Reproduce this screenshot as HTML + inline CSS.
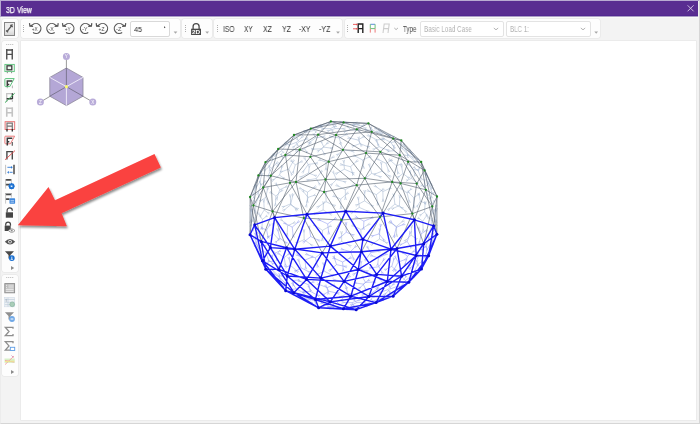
<!DOCTYPE html>
<html><head><meta charset="utf-8">
<style>
html,body{margin:0;padding:0;width:700px;height:424px;overflow:hidden;background:#f3f3f3;font-family:"Liberation Sans",sans-serif;}
.abs{position:absolute;}
#win{position:absolute;left:0;top:0;width:700px;height:424px;background:#f3f3f3;}
#bord{position:absolute;left:0;top:0;width:698px;height:422px;border:1px solid #d6d6d6;border-top-color:#cdc3da;border-left-color:#ececec;}
#title{position:absolute;left:1px;top:1px;width:697px;height:15px;background:#592d91;}
#title span{position:absolute;left:5px;top:4px;font-size:8.3px;line-height:10px;color:#fff;transform:scaleX(0.84);transform-origin:0 0;will-change:transform;-webkit-text-stroke:0.25px #fff;}
.panel{position:absolute;background:#fdfdfd;border-radius:2px;box-shadow:0 0 0 0.5px #e4e4e4;}
#vp{position:absolute;left:21px;top:41px;width:675px;height:379px;background:#fff;box-shadow:0 0 0 0.6px #e6e6e6;}
.tt{position:absolute;font-size:8.2px;line-height:10px;color:#333;white-space:nowrap;will-change:transform;transform-origin:0 0;}
.grip{position:absolute;width:1px;height:7px;background:repeating-linear-gradient(#b8b8b8 0 1px,transparent 1px 2px);}
.hgrip{position:absolute;height:1px;width:8px;background:repeating-linear-gradient(90deg,#b8b8b8 0 1px,transparent 1px 2px);}
.dd{position:absolute;width:0;height:0;border-left:3px solid transparent;border-right:3px solid transparent;border-top:3px solid #a6a6a6;}
.combo{position:absolute;background:#fff;border:1px solid #e3e3e3;border-radius:2px;}
svg{position:absolute;overflow:visible;z-index:5;}
</style></head>
<body>
<div id="win">
  <div id="bord"></div>
  <div id="title"><span>3D View</span>
    <svg style="left:685.3px;top:3.2px" width="8" height="8" viewBox="0 0 8 8"><path d="M1.6 1.3L7.6 7.3M7.6 1.3L1.6 7.3" stroke="#ddd3ea" stroke-width="0.85"/></svg>
  </div>

  <div class="abs" style="left:1px;top:15px;width:697px;height:1px;background:#512790;"></div>
  <div class="abs" style="left:1px;top:16px;width:697px;height:1px;background:#ab9dc6;"></div>
  <div class="abs" style="left:1px;top:17px;width:697px;height:1px;background:#f9f9f9;"></div>
  <div class="abs" style="left:0;top:0;width:1px;height:17px;background:#b6a8cf;"></div>
  <div class="abs" style="left:0;top:0;width:699px;height:1px;background:#b9abd2;"></div>
  <!-- top-left wrench panel -->
  <div class="panel" style="left:1.5px;top:18.5px;width:16.8px;height:19.6px;"></div>
  <div class="abs" style="left:4px;top:22px;width:9px;height:12px;background:linear-gradient(#ececec 60%,#d6d6d6);border:1px solid #858585;"></div>

  <!-- main toolbar panels -->
  <div class="panel" style="left:21px;top:18.5px;width:159.4px;height:19.6px;"></div>
  <div class="panel" style="left:181.7px;top:18.5px;width:30.3px;height:19.6px;"></div>
  <div class="panel" style="left:213.5px;top:18.5px;width:128.6px;height:19.6px;"></div>
  <div class="panel" style="left:344.8px;top:18.5px;width:255.7px;height:19.6px;"></div>

  <!-- left toolbar panels -->
  <div class="panel" style="left:2px;top:41px;width:16px;height:231px;"></div>
  <div class="panel" style="left:2px;top:275px;width:16px;height:101px;"></div>


  <!-- toolbar contents -->
  <svg style="left:0;top:0" width="700" height="424" viewBox="0 0 700 424">
    <!-- wrench -->
    <path d="M7.1 31.4L11.5 25.9" stroke="#555" stroke-width="1.4" fill="none"/>
    <path d="M10.3 25.1L12.7 27M6 30.6L8.1 32.2M11.6 26L12.3 24.3" stroke="#555" stroke-width="1.3" fill="none"/>
    <!-- grips -->
    <path d="M23.5 25v1M23.5 27v1M23.5 29v1M23.5 31v1" stroke="#b0b0b0" stroke-width="1"/>
    <path d="M185.5 25v1M185.5 27v1M185.5 29v1M185.5 31v1" stroke="#b0b0b0" stroke-width="1"/>
    <path d="M217.5 25v1M217.5 27v1M217.5 29v1M217.5 31v1" stroke="#b0b0b0" stroke-width="1"/>
    <path d="M347.5 25v1M347.5 27v1M347.5 29v1M347.5 31v1" stroke="#b0b0b0" stroke-width="1"/>
    <!-- rotation icons -->
    <path d="M33.03 32.60A5.0 5.0 0 1 0 32.18 25.15L29.90 26.30M29.50 23.10L29.90 26.30L33.10 26.50M54.67 32.60A5.0 5.0 0 1 1 55.52 25.15L57.80 26.30M58.20 23.10L57.80 26.30L54.60 26.50M66.03 32.60A5.0 5.0 0 1 0 65.18 25.15L62.90 26.30M62.50 23.10L62.90 26.30L66.10 26.50M88.27 32.60A5.0 5.0 0 1 1 89.12 25.15L91.40 26.30M91.80 23.10L91.40 26.30L88.20 26.50M99.73 32.60A5.0 5.0 0 1 0 98.88 25.15L96.60 26.30M96.20 23.10L96.60 26.30L99.80 26.50M122.17 32.60A5.0 5.0 0 1 1 123.02 25.15L125.30 26.30M125.70 23.10L125.30 26.30L122.10 26.50" fill="none" stroke="#555" stroke-width="1.2" stroke-linejoin="miter"/>
    <g font-family="Liberation Sans" font-size="5.9" fill="#4a4a4a">
      <text x="31.8" y="30.8" textLength="5.9" lengthAdjust="spacingAndGlyphs">+X</text><text x="48.6" y="30.8" textLength="5.3" lengthAdjust="spacingAndGlyphs">-X</text><text x="64.8" y="30.8" textLength="5.9" lengthAdjust="spacingAndGlyphs">+Y</text><text x="82.2" y="30.8" textLength="5.3" lengthAdjust="spacingAndGlyphs">-Y</text><text x="98.5" y="30.8" textLength="5.9" lengthAdjust="spacingAndGlyphs">+Z</text><text x="116.1" y="30.8" textLength="5.3" lengthAdjust="spacingAndGlyphs">-Z</text>
    </g>
    <!-- 45 caret -->
    <path d="M164 26.2l1.6 1-1.6 1z" fill="#444"/>
    <!-- dropdown arrows -->
    <path d="M173.6 31.4h3.8l-1.9 2.4z M205.3 31.4h3.8l-1.9 2.4z M336.1 31.4h3.8l-1.9 2.4z M594.3 31.4h3.8l-1.9 2.4z" fill="#a8a8a8"/>
    <!-- lock 2D -->
    <path d="M193.1 29V26.6a3 3 0 0 1 6 0V29" fill="none" stroke="#4a4a4a" stroke-width="1.3"/>
    <rect x="191.1" y="28.7" width="9.9" height="6.3" fill="#4a4a4a"/>
    <text x="191.9" y="34.2" font-family="Liberation Sans" font-size="5.6" font-weight="bold" fill="#fff" textLength="8.2" lengthAdjust="spacingAndGlyphs">2D</text>
    <!-- R icons -->
    <path d="M358.2 33V24h4.6v9M358.2 28.6h4.6" fill="none" stroke="#222" stroke-width="1.4"/>
    <path d="M353 24.4h4.4M353 28.8h4.4" stroke="#e85050" stroke-width="0.9"/>
    <path d="M356.2 23.4l1.6 1-1.6 1zM356.2 27.8l1.6 1-1.6 1z" fill="#e85050"/>
    <path d="M370.3 24.3h4.8" stroke="#5b8ed6" stroke-width="1"/>
    <path d="M370.3 24.3v4.3M375.1 24.3v4.3M370.3 28.6h4.8" stroke="#6cc17a" stroke-width="1" fill="none"/>
    <path d="M370.3 28.6v4M375.1 28.6v4" stroke="#ec7b7b" stroke-width="1" fill="none"/>
    <path d="M383 33l1.2-9h5l-1.2 9M383.6 28.6h5" fill="none" stroke="#cdcdcd" stroke-width="1.1"/>
    <path d="M394.3 28l1.8 1.6 1.8-1.6" fill="none" stroke="#9a9a9a" stroke-width="0.8"/>
    <path d="M493.8 28l2.2 1.8 2.2-1.8M580.8 28l2.2 1.8 2.2-1.8" fill="none" stroke="#a0a0a0" stroke-width="0.8"/>
  </svg>
  <div class="combo" style="left:130px;top:21px;width:38px;height:14px;border-color:#d9d9d9"></div>
  <div class="tt" style="left:133.6px;top:25.2px;font-size:8px;color:#222;transform:scaleX(0.9)">45</div>
  <div class="tt" style="left:223.3px;top:25px;font-size:8.2px;color:#333;transform:scaleX(0.814)">ISO</div>
  <div class="tt" style="left:244.3px;top:25px;font-size:8.2px;color:#333;transform:scaleX(0.79)">XY</div>
  <div class="tt" style="left:263.3px;top:25px;font-size:8.2px;color:#333;transform:scaleX(0.84)">XZ</div>
  <div class="tt" style="left:282px;top:25px;font-size:8.2px;color:#333;transform:scaleX(0.85)">YZ</div>
  <div class="tt" style="left:299px;top:25px;font-size:8.2px;color:#333;transform:scaleX(0.83)">-XY</div>
  <div class="tt" style="left:318.6px;top:25px;font-size:8.2px;color:#333;transform:scaleX(0.86)">-YZ</div>
  <div class="tt" style="left:403.2px;top:25px;font-size:8.2px;color:#444;transform:scaleX(0.75)">Type</div>
  <div class="combo" style="left:420px;top:21px;width:82px;height:14px;"></div>
  <div class="combo" style="left:506px;top:21px;width:83px;height:14px;"></div>
  <div class="tt" style="left:424px;top:25px;font-size:8.2px;color:#b4b4b4;transform:scaleX(0.774)">Basic Load Case</div>
  <div class="tt" style="left:510px;top:25px;font-size:8.2px;color:#b4b4b4;transform:scaleX(0.76)">BLC 1:</div>

  <!-- viewport -->
  <div id="vp"></div>
  <svg style="left:0;top:0" width="700" height="424" viewBox="0 0 700 424">
    <path d="M6 44.5h1.3M8 44.5h1.3M10 44.5h1.3M12 44.5h1.3" stroke="#c8c8c8" stroke-width="1"/>
    <path d="M6 49.95h7M6.75 59.4V49M12.25 59.4V49M6.75 54.4h5.5" stroke="#4e4e4e" stroke-width="1.4" fill="none"/>
    <rect x="4.9" y="64.4" width="9.4" height="7.2" fill="#f2faf4" stroke="#5cc27c" stroke-width="0.9"/>
    <rect x="7" y="65.8" width="4.8" height="4" fill="none" stroke="#3a3a3a" stroke-width="1.3"/>
    <path d="M7.3 71.8v1.4M11.6 71.8v1.4" stroke="#888" stroke-width="1"/>
    <path d="M7.3 87V80.9h5.1M7.3 84.4h2" stroke="#3a3a3a" stroke-width="1.5" fill="none"/>
    <path d="M12.4 85.5v2.8M7.3 86.5v1.8" stroke="#b8b8b8" stroke-width="1.1"/>
    <path d="M5.6 78.6h8.6l-4.4 8H5.6q-0.7 0-0.7-0.7V79.3q0-0.7 0.7-0.7z" fill="none" stroke="#55c077" stroke-width="0.95"/>
    <path d="M6.7 102V93.7h6" stroke="#c4c4c4" stroke-width="1.3" fill="none"/>
    <path d="M12.4 93.3v5.8M6.7 98.8h5.9" stroke="#3a3a3a" stroke-width="1.4" fill="none"/>
    <path d="M12.4 99v3" stroke="#c4c4c4" stroke-width="1.2"/>
    <path d="M5 102.6L14.7 93.2" stroke="#3fae5e" stroke-width="1"/>
    <path d="M6 108.25h7M6.75 116.7V107.3M12.25 116.7V107.3M6.75 112.7h5.5" stroke="#c4c4c4" stroke-width="1.6" fill="none"/>
    <rect x="5.1" y="121.7" width="9.6" height="7.8" fill="#fff6f6" stroke="#e66a6a" stroke-width="0.9"/>
    <path d="M7 129V123.2h5.3V129M7 126.2h5.3" stroke="#777" stroke-width="1.2" fill="none"/>
    <path d="M7 129v2.4M12.3 129v2.4" stroke="#333" stroke-width="1.4"/>
    <path d="M5.6 136.2h9l-4.2 7.6H5.6q-0.7 0-0.7-0.7V136.9q0-0.7 0.7-0.7z" fill="none" stroke="#e66a6a" stroke-width="0.9"/>
    <path d="M7.3 145.6V138.3h5M7.3 141.8h2" stroke="#3a3a3a" stroke-width="1.5" fill="none"/>
    <path d="M12.3 142v3.8" stroke="#666" stroke-width="1.3"/>
    <path d="M6.9 159.5V151.6h5.4v7.9" stroke="#4a4a4a" stroke-width="1.4" fill="none"/>
    <path d="M5 159.8L15 150.6" stroke="#e04848" stroke-width="0.9"/>
    <path d="M5.6 164.8v9.5" stroke="#c0c0c0" stroke-width="1"/>
    <path d="M14 164.8v9.5" stroke="#4a4a4a" stroke-width="1.5"/>
    <path d="M7.4 167.3h4M9.6 172.3h3" stroke="#2f7ad6" stroke-width="0.9"/>
    <path d="M11 165.9l1.8 1.4-1.8 1.4zM8.9 170.9l-1.8 1.4 1.8 1.4z" fill="#2f7ad6"/>
    <path d="M5 179.9h7M5 184.7h5" stroke="#4a4a4a" stroke-width="1.8"/>
    <path d="M5.6 179v9.6M11.4 179v4" stroke="#c8c8c8" stroke-width="1"/>
    <circle cx="11.6" cy="186.2" r="2.1" fill="none" stroke="#1a6fd0" stroke-width="1.5"/>
    <path d="M11.6 183v6.4M8.4 186.2h6.4M9.4 184l4.4 4.4M13.8 184l-4.4 4.4" stroke="#1a6fd0" stroke-width="0.9"/>
    <circle cx="11.6" cy="186.2" r="0.8" fill="#fff"/>
    <path d="M5 194.4h7M5 199.1h4.5" stroke="#4a4a4a" stroke-width="1.8"/>
    <path d="M5.6 193.6v10M11.4 193.6v4" stroke="#c8c8c8" stroke-width="1"/>
    <rect x="9.5" y="198.3" width="5.6" height="5.4" rx="0.6" fill="#3d86dc"/>
    <path d="M10.5 200.6h3.6M10.5 202.2h3.6" stroke="#d6e6fa" stroke-width="0.7"/>
    <path d="M7.1 212.5V210.4a2.6 2.6 0 0 1 5.2 0v0.4" fill="none" stroke="#444" stroke-width="1.2"/>
    <rect x="5.8" y="212.3" width="7.2" height="5.4" fill="#454545"/>
    <path d="M5.7 225.8V224.6a2.4 2.4 0 0 1 4.8 0v1.2" fill="none" stroke="#444" stroke-width="1.2"/>
    <rect x="4.7" y="225.6" width="6" height="5.4" fill="#454545"/>
    <path d="M8.4 230.6q3.3-3.4 6.6 0q-3.3 3.4-6.6 0z" fill="#fff" stroke="#8a8a8a" stroke-width="0.9"/>
    <circle cx="11.7" cy="230.6" r="1" fill="#8a8a8a"/>
    <path d="M4.8 241.7q5.2-5.6 10.4 0q-5.2 5.6-10.4 0z" fill="#555"/>
    <circle cx="10" cy="241.7" r="1.8" fill="#fff"/><circle cx="10" cy="241.7" r="1" fill="#555"/>
    <path d="M4.9 251.2h9.1l-3.6 3.8v3.4h-1.9v-3.4z" fill="#4a4a4a"/>
    <circle cx="11.8" cy="258.1" r="2.9" fill="#1a6fd0"/>
    <path d="M11.8 256.6v2.4M10.7 259.4h2.2" stroke="#fff" stroke-width="0.8"/>
    <path d="M11 266l3.2 2-3.2 2z" fill="#8c8c8c"/>
    <path d="M6 277.5h1.3M8 277.5h1.3M10 277.5h1.3M12 277.5h1.3" stroke="#c8c8c8" stroke-width="1"/>
    <rect x="4.8" y="283.6" width="9.8" height="9.2" fill="#bdbdbd" stroke="#8c8c8c" stroke-width="0.9"/>
    <rect x="8.4" y="284.6" width="5.2" height="3.6" fill="#d4d4d4"/>
    <path d="M5.8 289.3h7.8M5.8 291.3h7.8" stroke="#f4f4f4" stroke-width="0.9"/>
    <path d="M6.6 284.8v1.2M6.6 286.8v1.2" stroke="#f4f4f4" stroke-width="0.8"/>
    <rect x="4.6" y="297.4" width="10" height="9.4" fill="#eef1f4" stroke="#cfdbe6" stroke-width="0.6"/>
    <path d="M4.8 299.5h9.8M4.8 302.3h9.8M4.8 304.6h9.8M8 297.6v9" stroke="#bac9d8" stroke-width="0.6"/>
    <path d="M6.2 298.8v3" stroke="#9aa8b5" stroke-width="0.7"/>
    <circle cx="12.2" cy="304.3" r="2.4" fill="#a9cdb8" stroke="#7fae95" stroke-width="0.6"/>
    <path d="M4.9 312.2h9.1l-3.6 3.8v3.4h-1.9v-3.4z" fill="#8f8f8f"/>
    <circle cx="12" cy="319" r="2.9" fill="#70a8e6"/>
    <path d="M10.6 319h2.8" stroke="#fff" stroke-width="1"/>
    <path d="M13 328.8V327.3H5.3l3.7 4.2-3.7 4.2H13V334" fill="none" stroke="#8e8e8e" stroke-width="1.3"/>
    <path d="M13 343.2V341.7H5.3l3.7 4.2-3.7 4.2h5" fill="none" stroke="#8e8e8e" stroke-width="1.3"/>
    <rect x="10.3" y="347.3" width="4.4" height="3.2" fill="#fff" stroke="#5d9de6" stroke-width="0.9"/>
    <path d="M4.5 358.5h10.2v4.4H4.5z" fill="#d8f0c8"/>
    <path d="M5 364.6L14 356M5 360.5l9.3 1.6" stroke="#f3a0a0" stroke-width="0.9"/>
    <path d="M5 361.5l9.5-0.4" stroke="#f0e890" stroke-width="1"/>
    <path d="M11.5 355.5l2 2" stroke="#d9a0c8" stroke-width="1"/>
    <path d="M11 370l3.2 2-3.2 2z" fill="#8c8c8c"/>
  </svg>
  <!-- sphere -->
  <svg style="left:0;top:0" width="700" height="424" viewBox="0 0 700 424">
    <path d="M336.5 179.6L332.4 183.7L329.9 184.9M332.4 183.7L331.2 186.2M336.5 179.6L333.9 173.7L333.6 170.6M333.9 173.7L331.9 171.4M336.5 179.6L343.2 181.4L346.0 183.1M343.2 181.4L346.4 181.4M350.5 166.7L343.3 165.0L340.2 163.4M343.3 165.0L339.8 165.1M350.5 166.7L355.6 162.2L358.6 160.9M355.6 162.2L357.4 159.5M350.5 166.7L352.5 172.8L352.6 175.8M352.5 172.8L354.3 175.3M371.7 173.4L366.7 177.3L363.9 178.3M366.7 177.3L365.1 179.8M371.7 173.4L369.8 166.7L369.9 163.4M369.8 166.7L368.1 163.9M371.7 173.4L378.5 176.2L381.2 178.3M378.5 176.2L381.9 176.7M386.0 163.4L379.4 160.0L376.9 157.7M379.4 160.0L376.0 159.3M386.0 163.4L390.5 160.7L393.0 160.3M390.5 160.7L392.1 158.7M386.0 163.4L388.1 169.5L388.1 172.6M388.1 169.5L389.8 172.0M402.9 173.6L399.3 176.3L397.2 176.9M399.3 176.3L398.3 178.3M402.9 173.6L401.8 167.5L402.2 164.6M401.8 167.5L400.5 164.9M402.9 173.6L407.4 176.9L409.0 179.1M407.4 176.9L410.0 177.6M343.6 149.9L338.7 153.8L335.9 154.9M338.7 153.8L337.0 156.3M343.6 149.9L341.2 145.0L340.8 142.3M341.2 145.0L339.2 143.2M343.6 149.9L351.1 151.0L354.3 152.4M351.1 151.0L354.5 150.6M358.0 140.0L350.8 138.3L347.7 136.7M350.8 138.3L347.3 138.4M358.0 140.0L362.5 137.3L365.0 136.8M362.5 137.3L364.1 135.2M358.0 140.0L360.7 144.3L361.1 146.8M360.7 144.3L362.6 145.8M379.1 146.7L374.8 148.8L372.5 149.0M374.8 148.8L373.3 150.6M379.1 146.7L376.7 141.8L376.4 139.1M376.7 141.8L374.7 139.9M379.1 146.7L385.9 149.5L388.7 151.6M385.9 149.5L389.4 150.0M350.5 129.7L345.7 131.4L343.3 131.4M345.7 131.4L343.9 133.1M350.5 129.7L348.2 127.3L347.8 125.6M348.2 127.3L346.5 126.8M350.5 129.7L357.5 130.4L360.5 131.6M357.5 130.4L360.7 129.8M340.7 199.0L335.3 196.7L333.1 194.8M335.3 196.7L332.4 196.5M340.7 199.0L346.0 194.5L349.0 193.1M346.0 194.5L347.8 191.7M340.7 199.0L340.9 206.0L340.1 209.1M340.9 206.0L341.9 209.1M359.3 207.4L358.5 200.0L359.0 196.6M358.5 200.0L357.2 196.8M359.3 207.4L366.2 210.5L368.9 212.8M366.2 210.5L369.6 211.1M359.3 207.4L353.4 211.5L350.2 212.7M353.4 211.5L351.2 214.2M360.9 229.5L354.5 226.4L351.9 224.2M354.5 226.4L351.2 225.8M360.9 229.5L367.2 225.4L370.6 224.2M367.2 225.4L369.6 222.7M360.9 229.5L361.1 236.8L360.3 240.2M361.1 236.8L362.1 240.1M379.5 239.0L379.7 231.7L380.6 228.4M379.7 231.7L378.8 228.4M379.5 239.0L385.3 242.1L387.5 244.3M385.3 242.1L388.3 242.8M379.5 239.0L373.6 243.2L370.4 244.4M373.6 243.2L371.4 245.8M376.3 194.7L369.8 191.5L367.3 189.3M369.8 191.5L366.5 190.9M376.3 194.7L381.6 190.5L384.5 189.3M381.6 190.5L383.4 187.9M376.3 194.7L377.5 202.0L377.2 205.5M377.5 202.0L378.9 205.2M394.9 204.1L394.0 196.8L394.5 193.4M394.0 196.8L392.7 193.6M394.9 204.1L400.6 207.3L402.8 209.5M400.6 207.3L403.7 207.9M394.9 204.1L389.9 208.4L387.1 209.6M389.9 208.4L388.3 211.0M396.5 226.3L391.0 223.2L389.0 221.0M391.0 223.2L388.1 222.6M396.5 226.3L401.7 222.1L404.7 220.9M401.7 222.1L403.5 219.5M396.5 226.3L396.6 233.6L395.8 237.0M396.6 233.6L397.6 236.9M407.1 193.0L402.2 189.4L400.5 187.0M402.2 189.4L399.4 188.4M407.1 193.0L410.2 189.9L412.3 189.1M410.2 189.9L411.0 187.9M407.1 193.0L408.8 199.8L408.8 203.1M408.8 199.8L410.5 202.7M323.1 210.0L323.4 204.1L324.5 201.4M323.4 204.1L322.7 201.3M323.1 210.0L329.1 213.3L331.4 215.6M329.1 213.3L332.3 214.0M323.1 210.0L316.7 212.7L313.5 213.1M316.7 212.7L314.2 214.7M322.5 230.3L328.7 226.9L332.0 226.2M328.7 226.9L331.1 224.6M322.5 230.3L322.4 237.8L321.4 241.2M322.4 237.8L323.2 241.2M322.5 230.3L316.3 226.3L314.0 223.7M316.3 226.3L313.0 225.2M304.2 239.6L304.0 232.5L304.9 229.3M304.0 232.5L303.1 229.3M304.2 239.6L310.1 244.0L312.3 246.7M310.1 244.0L313.3 245.3M304.2 239.6L298.3 242.3L295.3 242.7M298.3 242.3L296.0 244.3M341.7 241.5L341.6 234.4L342.4 231.2M341.6 234.4L340.6 231.2M341.7 241.5L348.2 244.9L350.8 247.2M348.2 244.9L351.6 245.6M341.7 241.5L335.2 245.3L331.9 246.2M335.2 245.3L332.8 247.8M308.0 197.4L313.3 195.6L316.0 195.6M313.3 195.6L315.4 193.9M308.0 197.4L306.6 204.2L305.1 207.1M306.6 204.2L306.9 207.5M308.0 197.4L304.0 192.3L302.9 189.4M304.0 192.3L301.5 190.6M290.8 203.8L295.1 208.5L296.4 211.3M295.1 208.5L297.7 210.1M290.8 203.8L284.8 206.3L281.7 206.6M284.8 206.3L282.4 208.3M290.8 203.8L292.5 196.6L294.2 193.6M292.5 196.6L292.4 193.2M279.8 189.7L285.1 187.2L287.9 186.8M285.1 187.2L287.2 185.2M279.8 189.7L277.4 196.8L275.5 199.8M277.4 196.8L277.2 200.4M279.8 189.7L276.8 185.1L276.2 182.5M276.8 185.1L274.7 183.4M265.6 197.5L267.9 202.1L268.1 204.6M267.9 202.1L269.7 203.7M265.6 197.5L261.6 200.1L259.2 200.5M261.6 200.1L260.2 202.0M265.6 197.5L267.3 190.3L268.9 187.2M267.3 190.3L267.2 186.8M260.9 185.5L264.1 182.3L266.3 181.4M264.1 182.3L265.0 180.1M260.9 185.5L258.4 192.1L256.4 194.7M258.4 192.1L258.1 195.4M260.9 185.5L260.1 182.2L260.6 180.4M260.1 182.2L258.8 180.9M287.6 225.8L293.0 223.2L295.8 222.9M293.0 223.2L295.0 221.3M287.6 225.8L287.2 233.0L286.2 236.3M287.2 233.0L288.0 236.4M287.6 225.8L282.7 221.0L281.0 218.2M282.7 221.0L279.8 219.5M273.4 233.5L277.7 238.2L279.0 241.0M277.7 238.2L280.3 239.8M273.4 233.5L269.4 236.1L267.1 236.6M269.4 236.1L268.1 238.1M273.4 233.5L273.1 226.2L273.9 222.9M273.1 226.2L272.1 222.9M262.4 219.4L265.8 216.8L267.8 216.3M265.8 216.8L266.7 214.8M262.4 219.4L262.0 226.7L260.9 229.9M262.0 226.7L262.7 230.0M262.4 219.4L259.4 214.8L258.8 212.2M259.4 214.8L257.3 213.2M316.3 178.6L318.9 183.0L319.3 185.4M318.9 183.0L320.8 184.5M316.3 178.6L309.6 179.7L306.4 179.3M309.6 179.7L306.7 181.1M316.3 178.6L320.4 173.0L322.9 171.0M320.4 173.0L321.5 169.9M308.1 164.5L304.1 170.3L301.6 172.4M304.1 170.3L303.0 173.4M308.1 164.5L305.4 159.6L304.9 156.9M305.4 159.6L303.3 157.8M308.1 164.5L314.9 163.5L318.1 164.0M314.9 163.5L317.9 162.2M321.5 148.8L323.9 153.0L324.2 155.4M323.9 153.0L325.7 154.5M321.5 148.8L314.3 149.1L311.0 148.3M314.3 149.1L311.1 150.1M321.5 148.8L326.3 144.2L329.2 142.8M326.3 144.2L327.9 141.5M315.6 137.8L310.4 141.7L307.4 142.8M310.4 141.7L308.5 144.2M315.6 137.8L314.1 134.8L314.2 133.0M314.1 134.8L312.6 133.8M315.6 137.8L322.4 136.8L325.6 137.3M322.4 136.8L325.3 135.5M330.2 128.7L332.2 130.7L332.4 132.3M332.2 130.7L333.7 131.1M330.2 128.7L323.9 128.6L321.0 127.7M323.9 128.6L321.0 129.5M330.2 128.7L334.6 126.6L337.0 126.5M334.6 126.6L336.3 124.8M288.8 169.1L291.2 173.4L291.5 175.8M291.2 173.4L293.1 174.9M288.8 169.1L282.9 171.3L279.9 171.4M282.9 171.3L280.5 173.1M288.8 169.1L292.4 162.7L294.8 160.3M292.4 162.7L293.3 159.4M282.9 158.1L278.9 163.9L276.3 166.0M278.9 163.9L277.8 167.1M282.9 158.1L281.4 155.1L281.5 153.3M281.4 155.1L279.9 154.1M282.9 158.1L288.5 155.3L291.4 154.9M288.5 155.3L290.6 153.3M296.3 142.4L297.4 144.8L297.1 146.3M297.4 144.8L298.8 145.5M296.3 142.4L290.3 144.6L287.3 144.7M290.3 144.6L287.9 146.4M296.3 142.4L301.1 137.9L303.9 136.5M301.1 137.9L302.7 135.2M269.2 166.7L269.7 169.7L269.0 171.2M269.7 169.7L270.8 170.8M269.2 166.7L265.6 169.6L263.4 170.2M265.6 169.6L264.6 171.6M269.2 166.7L272.2 160.8L274.3 158.6M272.2 160.8L272.7 157.8M411.1 235.2L406.4 239.6L403.7 240.9M406.4 239.6L404.9 242.2M411.1 235.2L411.5 228.1L412.6 224.9M411.5 228.1L410.8 224.8M411.1 235.2L415.3 238.0L416.7 240.1M415.3 238.0L417.7 238.6M422.8 221.2L419.4 218.7L418.3 216.8M419.4 218.7L417.3 218.3M422.8 221.2L426.0 216.4L428.1 214.6M426.0 216.4L426.6 213.7M422.8 221.2L423.1 228.7L422.4 232.1M423.1 228.7L424.2 232.0M431.0 228.1L428.6 233.3L426.7 235.2M428.6 233.3L428.3 236.0M431.0 228.1L431.4 221.0L432.5 217.8M431.4 221.0L430.7 217.7M431.0 228.1L432.9 230.1L433.2 231.6M432.9 230.1L434.5 230.4M420.4 201.2L417.8 205.3L415.8 206.7M417.8 205.3L417.3 207.6M420.4 201.2L419.2 195.4L419.5 192.6M419.2 195.4L417.7 192.9M420.4 201.2L424.4 202.9L425.8 204.5M424.4 202.9L426.5 202.9M413.6 169.7L414.6 174.3L414.2 176.6M414.6 174.3L415.9 176.2M413.6 169.7L409.0 165.0L407.6 162.2M409.0 165.0L406.3 163.4M413.6 169.7L417.2 169.9L418.8 170.9M417.2 169.9L418.9 169.1M408.5 155.4L405.6 155.3L404.3 154.4M405.6 155.3L404.3 156.2M408.5 155.4L406.1 150.5L405.9 147.9M406.1 150.5L404.3 148.6M408.5 155.4L413.8 160.3L415.5 163.2M413.8 160.3L416.8 161.9M415.7 157.6L418.6 161.9L419.2 164.3M418.6 161.9L420.6 163.3M415.7 157.6L410.9 152.0L409.5 148.8M410.9 152.0L408.1 150.0M415.7 157.6L417.5 159.1L417.8 160.5M417.5 159.1L418.9 159.1M405.2 147.0L403.9 144.9L404.1 143.4M403.9 144.9L402.6 144.4M405.2 147.0L401.2 144.2L400.0 142.2M401.2 144.2L398.9 143.7M405.2 147.0L410.5 152.0L412.3 154.9M410.5 152.0L413.5 153.6M407.5 154.2L412.0 156.8L413.6 158.7M412.0 156.8L414.5 157.2M407.5 154.2L402.8 149.0L401.3 146.1M402.8 149.0L400.0 147.3M407.5 154.2L407.7 156.7L406.9 157.9M407.7 156.7L408.7 157.8M390.9 142.5L393.8 146.7L394.4 149.1M393.8 146.7L395.9 148.1M390.9 142.5L384.5 139.0L382.1 136.6M384.5 139.0L381.2 138.1M390.9 142.5L394.3 141.8L396.1 142.4M394.3 141.8L395.7 140.7M380.5 131.9L377.6 131.9L376.2 130.9M377.6 131.9L376.2 132.7M380.5 131.9L376.5 129.1L375.2 127.1M376.5 129.1L374.1 128.6M380.5 131.9L387.4 134.7L390.1 136.9M387.4 134.7L390.8 135.2M387.6 134.2L392.2 136.3L393.8 138.0M392.2 136.3L394.6 136.4M387.6 134.2L381.3 130.6L378.8 128.2M381.3 130.6L378.0 129.8M387.6 134.2L389.5 135.6L389.7 137.0M389.5 135.6L390.8 135.6M361.2 125.9L364.7 127.8L365.8 129.5M364.7 127.8L366.7 127.9M361.2 125.9L355.4 124.7L352.9 123.3M355.4 124.7L352.6 125.1M361.2 125.9L363.6 125.0L364.9 125.5M363.6 125.0L364.4 123.8M328.5 124.2L333.5 123.6L335.8 124.2M333.5 123.6L335.6 122.4M328.5 124.2L322.7 125.6L319.8 125.4M322.7 125.6L320.3 127.2M328.5 124.2L329.2 123.3L330.3 123.5M329.2 123.3L328.9 122.3M311.9 128.4L311.6 128.4L311.2 127.6M311.6 128.4L311.7 129.4M311.9 128.4L306.0 130.5L303.0 130.7M306.0 130.5L303.6 132.4M311.9 128.4L318.2 126.1L321.3 125.9M318.2 126.1L320.7 124.2M314.3 130.4L319.8 127.4L322.7 126.9M319.8 127.4L321.8 125.3M314.3 130.4L307.6 131.9L304.3 131.7M307.6 131.9L304.7 133.5M314.3 130.4L315.6 131.8L315.4 133.0M315.6 131.8L316.8 131.9M299.2 141.6L297.4 139.4L297.4 137.8M297.4 139.4L296.0 139.0M299.2 141.6L294.6 146.0L291.9 147.4M294.6 146.0L293.2 148.7M299.2 141.6L305.4 139.3L308.6 139.1M305.4 139.3L307.9 137.4M304.6 148.8L309.1 144.2L311.7 142.7M309.1 144.2L310.4 141.4M304.6 148.8L298.3 150.9L295.1 151.0M298.3 150.9L295.7 152.7M304.6 148.8L306.5 151.5L306.6 153.2M306.5 151.5L308.1 152.1M294.4 137.5L299.8 134.6L302.7 134.0M299.8 134.6L301.9 132.5M294.4 137.5L289.1 141.3L286.1 142.3M289.1 141.3L287.2 143.8M294.4 137.5L294.2 136.7L295.1 136.2M294.2 136.7L293.3 136.4M279.2 148.7L278.9 148.8L278.5 148.0M278.9 148.8L279.0 149.7M279.2 148.7L274.7 153.2L272.0 154.5M274.7 153.2L273.3 155.8M279.2 148.7L284.1 144.2L286.9 142.8M284.1 144.2L285.7 141.5M281.6 150.7L285.7 145.5L288.2 143.7M285.7 145.5L286.8 142.6M281.6 150.7L276.3 154.5L273.4 155.5M276.3 154.5L274.4 157.0M281.6 150.7L282.9 152.2L282.8 153.4M282.9 152.2L284.1 152.2M267.4 162.2L271.0 157.8L273.3 156.4M271.0 157.8L271.9 155.3M267.4 162.2L264.4 166.6L262.3 168.0M264.4 166.6L263.8 169.0M267.4 162.2L266.8 162.2L266.5 161.3M266.8 162.2L266.5 163.1M254.0 192.6L255.5 186.9L257.0 184.6M255.5 186.9L255.3 184.1M254.0 192.6L253.8 196.8L252.8 198.7M253.8 196.8L254.6 198.8M254.0 192.6L252.7 194.1L251.5 194.2M252.7 194.1L252.8 195.3M251.2 212.4L251.9 210.1L253.1 209.3M251.9 210.1L251.4 208.8M251.2 212.4L250.8 219.8L249.7 223.1M250.8 219.8L251.5 223.2M251.2 212.4L250.8 207.3L251.6 205.0M250.8 207.3L249.8 205.1M251.6 218.8L251.1 211.7L251.8 208.3M251.1 211.7L250.0 208.4M251.6 218.8L251.1 224.1L250.0 226.4M251.1 224.1L251.7 226.6M251.6 218.8L252.6 220.8L252.3 222.1M252.6 220.8L253.9 221.3M254.9 227.2L254.4 220.0L255.1 216.7M254.4 220.0L253.3 216.8M254.9 227.2L257.0 231.9L257.1 234.4M257.0 231.9L258.8 233.7M254.9 227.2L253.3 229.7L251.8 230.3M253.3 229.7L253.3 231.3M399.4 205.5L394.0 208.0L391.2 208.3M394.0 208.0L392.0 210.0M399.4 205.5L404.4 210.2L406.0 213.0M404.4 210.2L407.2 211.7M399.4 205.5L399.8 198.2L400.8 194.9M399.8 198.2L399.0 194.8M413.6 197.7L413.9 205.0L413.1 208.3M413.9 205.0L414.9 208.3M413.6 197.7L417.6 195.1L419.9 194.6M417.6 195.1L418.9 193.1M413.6 197.7L409.3 193.0L408.0 190.2M409.3 193.0L406.7 191.4M411.5 178.3L407.9 180.0L405.9 180.0M407.9 180.0L406.6 181.6M411.5 178.3L416.2 182.1L417.8 184.5M416.2 182.1L418.9 183.1M411.5 178.3L410.4 172.9L410.8 170.2M410.4 172.9L409.0 170.6M424.6 211.8L421.2 214.5L419.2 215.0M421.2 214.5L420.3 216.4M424.6 211.8L427.6 216.4L428.2 219.0M427.6 216.4L429.7 218.1M424.6 211.8L425.0 204.5L426.1 201.3M425.0 204.5L424.3 201.2M364.6 200.9L370.7 204.9L373.0 207.5M370.7 204.9L374.0 206.0M364.6 200.9L364.7 193.4L365.6 190.1M364.7 193.4L363.8 190.0M364.6 200.9L358.3 204.3L355.1 205.0M358.3 204.3L355.9 206.6M345.3 189.7L345.4 196.8L344.6 200.0M345.4 196.8L346.4 200.0M345.3 189.7L351.8 185.9L355.1 185.0M351.8 185.9L354.2 183.4M345.3 189.7L338.8 186.3L336.2 184.0M338.8 186.3L335.4 185.6M344.4 169.2L351.1 172.2L353.8 174.4M351.1 172.2L354.6 172.8M344.4 169.2L343.9 162.8L344.6 159.9M343.9 162.8L342.8 160.0M344.4 169.2L338.2 172.6L334.9 173.4M338.2 172.6L335.8 175.0M326.2 162.1L326.0 167.8L325.0 170.4M326.0 167.8L326.8 170.5M326.2 162.1L331.7 158.0L334.8 156.9M331.7 158.0L333.7 155.5M326.2 162.1L321.0 160.3L318.9 158.7M321.0 160.3L318.3 160.4M382.9 191.6L383.0 198.7L382.1 202.0M383.0 198.7L383.9 201.9M382.9 191.6L388.7 188.9L391.7 188.5M388.7 188.9L391.0 186.9M382.9 191.6L376.9 187.2L374.7 184.5M376.9 187.2L373.7 186.0M381.9 171.2L388.1 175.2L390.4 177.8M388.1 175.2L391.4 176.3M381.9 171.2L381.4 164.8L382.1 161.8M381.4 164.8L380.3 161.9M381.9 171.2L376.3 173.5L373.4 173.8M376.3 173.5L374.1 175.4M362.7 160.0L363.4 166.0L362.8 168.9M363.4 166.0L364.6 168.7M362.7 160.0L368.5 157.3L371.6 156.9M368.5 157.3L370.8 155.2M362.7 160.0L356.2 156.6L353.6 154.3M356.2 156.6L352.8 155.9M396.4 165.7L397.7 171.5L397.5 174.4M397.7 171.5L399.3 174.0M396.4 165.7L400.3 164.4L402.3 164.7M400.3 164.4L401.7 163.0M396.4 165.7L391.1 161.1L389.3 158.3M391.1 161.1L388.1 159.7M326.1 201.7L332.5 204.8L335.1 207.1M332.5 204.8L335.9 205.4M326.1 201.7L325.9 194.4L326.7 191.0M325.9 194.4L324.9 191.1M326.1 201.7L319.8 205.8L316.4 207.0M319.8 205.8L317.4 208.5M307.5 192.2L313.4 188.0L316.7 186.9M313.4 188.0L315.6 185.4M307.5 192.2L301.7 189.1L299.5 186.9M301.7 189.1L298.7 188.5M307.5 192.2L307.4 199.5L306.4 202.8M307.4 199.5L308.2 202.8M290.6 204.9L296.0 208.0L298.0 210.2M296.0 208.0L298.9 208.6M290.6 204.9L290.4 197.6L291.2 194.2M290.4 197.6L289.4 194.3M290.6 204.9L285.3 209.1L282.3 210.3M285.3 209.1L283.5 211.7M308.6 173.0L314.2 175.2L316.4 177.0M314.2 175.2L317.0 175.3M308.6 173.0L309.2 167.7L310.3 165.3M309.2 167.7L308.6 165.1M308.6 173.0L302.5 176.2L299.3 176.9M302.5 176.2L300.1 178.5M418.4 171.2L415.0 168.1L414.1 166.1M415.0 168.1L412.9 167.4M418.4 171.2L420.8 177.3L421.1 180.5M420.8 177.3L422.8 179.8M418.4 171.2L419.3 168.2L420.6 167.1M419.3 168.2L418.9 166.6M428.0 182.8L427.3 185.1L426.1 185.9M427.3 185.1L427.8 186.4M428.0 182.8L431.0 187.3L431.6 189.8M431.0 187.3L433.1 188.9M428.0 182.8L425.7 175.9L425.6 172.5M425.7 175.9L423.9 173.1M427.5 176.3L425.5 171.6L425.3 169.1M425.5 171.6L423.7 169.8M427.5 176.3L430.7 183.0L431.3 186.4M430.7 183.0L432.9 185.6M427.5 176.3L426.5 174.4L426.9 173.0M426.5 174.4L425.3 173.9M431.3 191.1L433.1 192.9L433.4 194.3M433.1 192.9L434.6 193.0M431.3 191.1L431.6 196.2L430.9 198.5M431.6 196.2L432.7 198.4M431.3 191.1L429.0 184.3L428.8 180.9M429.0 184.3L427.1 181.4M424.5 186.8L424.5 181.4L425.4 178.9M424.5 181.4L423.6 178.9M424.5 186.8L427.1 193.3L427.4 196.6M427.1 193.3L429.1 195.9M424.5 186.8L421.9 185.7L421.1 184.4M421.9 185.7L420.4 186.1M432.1 204.0L430.0 199.3L429.9 196.8M430.0 199.3L428.3 197.5M432.1 204.0L432.6 211.2L431.9 214.6M432.6 211.2L433.7 214.4M432.1 204.0L433.7 201.5L435.2 200.9M433.7 201.5L433.7 199.9M435.8 218.8L435.1 221.1L433.9 221.9M435.1 221.1L435.6 222.5M435.8 218.8L436.2 223.9L435.4 226.3M436.2 223.9L437.2 226.1M435.8 218.8L436.2 211.5L437.3 208.1M436.2 211.5L435.5 208.1M435.4 212.4L435.9 207.1L437.1 204.8M435.9 207.1L435.3 204.7M435.4 212.4L435.9 219.6L435.2 222.9M435.9 219.6L437.0 222.8M435.4 212.4L434.4 210.4L434.7 209.1M434.4 210.4L433.1 209.9M323.8 147.1L319.3 150.3L316.8 151.0M319.3 150.3L317.9 152.5M323.8 147.1L330.1 148.0L332.8 149.3M330.1 148.0L333.1 147.5M323.8 147.1L321.9 143.0L321.9 140.8M321.9 143.0L320.2 141.5M339.2 137.9L340.4 141.9L340.1 143.9M340.4 141.9L341.8 143.4M339.2 137.9L345.0 135.1L348.0 134.6M345.0 135.1L347.2 133.0M339.2 137.9L332.3 136.9L329.2 135.5M332.3 136.9L329.0 137.3M335.2 128.5L329.6 130.5L326.7 130.6M329.6 130.5L327.3 132.3M335.2 128.5L342.3 128.7L345.5 129.8M342.3 128.7L345.6 128.0M335.2 128.5L333.8 126.2L333.9 124.6M333.8 126.2L332.4 125.6M352.0 124.7L353.6 126.2L353.7 127.6M353.6 126.2L354.9 126.3M352.0 124.7L357.4 124.3L359.9 125.0M357.4 124.3L359.8 123.2M352.0 124.7L345.0 123.7L342.0 122.3M345.0 123.7L341.7 124.1M347.6 122.4L342.1 122.1L339.6 121.1M342.1 122.1L339.5 122.9M347.6 122.4L354.5 122.8L357.5 123.8M354.5 122.8L357.6 122.0M347.6 122.4L346.3 122.4L345.7 121.5M346.3 122.4L345.7 123.3M360.0 143.6L354.4 145.7L351.5 145.8M354.4 145.7L352.1 147.5M360.0 143.6L366.7 146.3L369.5 148.4M366.7 146.3L370.1 146.7M360.0 143.6L358.9 138.9L359.3 136.5M358.9 138.9L357.6 136.9M376.8 139.9L378.0 143.8L377.7 145.8M378.0 143.8L379.4 145.3M376.8 139.9L382.2 139.4L384.7 140.1M382.2 139.4L384.6 138.3M376.8 139.9L370.2 136.4L367.6 134.0M370.2 136.4L366.7 135.6M372.8 130.4L367.5 130.0L365.1 129.0M367.5 130.0L365.0 130.8M372.8 130.4L379.5 133.1L382.2 135.2M379.5 133.1L382.9 133.5M372.8 130.4L371.3 128.1L371.4 126.6M371.3 128.1L369.9 127.5M393.9 150.7L389.4 151.1L387.3 150.3M389.4 151.1L387.5 152.1M393.9 150.7L398.6 154.4L400.2 156.8M398.6 154.4L401.3 155.4M393.9 150.7L393.7 146.7L394.4 144.8M393.7 146.7L392.6 144.9M264.2 210.0L267.6 212.5L268.7 214.4M267.6 212.5L269.7 212.9M264.2 210.0L263.9 202.6L264.6 199.2M263.9 202.6L262.8 199.2M264.2 210.0L261.1 214.9L258.9 216.6M261.1 214.9L260.4 217.6M256.0 203.1L255.6 210.3L254.5 213.5M255.6 210.3L256.3 213.6M256.0 203.1L258.4 198.0L260.3 196.0M258.4 198.0L258.7 195.2M256.0 203.1L254.1 201.1L253.8 199.6M254.1 201.1L252.5 200.8M259.6 182.2L260.8 184.0L260.6 185.3M260.8 184.0L262.1 184.3M259.6 182.2L261.6 175.6L263.3 172.9M261.6 175.6L261.6 172.4M259.6 182.2L256.5 187.1L254.3 188.9M256.5 187.1L255.8 189.8M258.0 178.2L255.4 184.4L253.4 186.9M255.4 184.4L255.1 187.6M258.0 178.2L260.5 172.9L262.4 170.9M260.5 172.9L260.8 170.1M258.0 178.2L258.2 177.3L259.1 177.0M258.2 177.3L257.3 176.7M275.9 196.0L275.5 203.1L274.4 206.3M275.5 203.1L276.2 206.4M275.9 196.0L280.6 191.6L283.3 190.3M280.6 191.6L282.1 189.0M275.9 196.0L271.8 193.2L270.3 191.2M271.8 193.2L269.3 192.7M279.5 175.1L283.0 177.6L284.0 179.5M283.0 177.6L285.1 178.1M279.5 175.1L281.5 168.5L283.2 165.7M281.5 168.5L281.5 165.2M279.5 175.1L274.2 179.2L271.2 180.3M274.2 179.2L272.3 181.8M271.4 168.2L268.7 174.6L266.6 177.1M268.7 174.6L268.3 177.8M271.4 168.2L276.0 163.9L278.7 162.6M276.0 163.9L277.5 161.3M271.4 168.2L269.4 166.2L269.2 164.7M269.4 166.2L267.9 166.0M295.3 164.9L293.5 170.8L291.9 173.2M293.5 170.8L293.6 173.7M295.3 164.9L300.2 162.2L302.9 161.8M300.2 162.2L302.1 160.2M295.3 164.9L292.0 161.6L291.2 159.5M292.0 161.6L289.9 160.8" stroke="#9aaecb" stroke-width="0.5" fill="none"/>
    <path d="M378.4 258.2L372.8 256.0L370.6 254.2M372.8 256.0L370.0 255.9M378.4 258.2L384.5 255.0L387.8 254.3M384.5 255.0L386.9 252.7M378.4 258.2L377.8 263.5L376.7 265.9M377.8 263.5L378.5 266.1M305.1 260.0L310.7 257.7L313.6 257.4M310.7 257.7L312.9 255.8M305.1 260.0L305.6 266.4L304.9 269.4M305.6 266.4L306.7 269.3M305.1 260.0L298.9 256.0L296.6 253.4M298.9 256.0L295.6 254.9M290.6 265.5L289.3 259.7L289.5 256.8M289.3 259.7L287.8 257.2M290.6 265.5L295.9 270.1L297.7 272.9M295.9 270.1L298.9 271.5M290.6 265.5L286.8 266.8L284.7 266.5M286.8 266.8L285.3 268.2M342.6 262.0L348.8 258.6L352.1 257.8M348.8 258.6L351.3 256.2M342.6 262.0L343.1 268.4L342.4 271.4M343.1 268.4L344.2 271.2M342.6 262.0L335.9 259.0L333.2 256.8M335.9 259.0L332.4 258.4M324.3 271.2L323.6 265.2L324.2 262.3M323.6 265.2L322.4 262.5M324.3 271.2L330.9 274.6L333.4 276.9M330.9 274.6L334.2 275.3M324.3 271.2L318.5 273.9L315.4 274.4M318.5 273.9L316.2 276.0M360.8 269.2L361.0 263.4L362.0 260.8M361.0 263.4L360.2 260.7M360.8 269.2L366.0 270.9L368.1 272.5M366.0 270.9L368.7 270.8M360.8 269.2L355.3 273.2L352.3 274.3M355.3 273.2L353.3 275.7M275.5 252.9L279.1 251.2L281.1 251.3M279.1 251.2L280.4 249.6M275.5 252.9L276.6 258.3L276.2 261.0M276.6 258.3L278.0 260.6M275.5 252.9L270.8 249.1L269.2 246.7M270.8 249.1L268.1 248.1M391.8 266.3L386.8 269.0L384.1 269.4M386.8 269.0L384.9 271.0M391.8 266.3L393.5 260.4L395.1 258.0M393.5 260.4L393.4 257.5M391.8 266.3L395.0 269.6L395.8 271.7M395.0 269.6L397.1 270.4M407.5 256.1L404.0 253.6L403.0 251.7M404.0 253.6L401.9 253.2M407.5 256.1L412.8 252.0L415.8 250.9M412.8 252.0L414.8 249.4M407.5 256.1L405.5 262.7L403.8 265.5M405.5 262.7L405.5 266.0M415.6 263.0L411.0 267.3L408.3 268.7M411.0 267.3L409.5 270.0M415.6 263.0L418.3 256.6L420.4 254.1M418.3 256.6L418.7 253.4M415.6 263.0L417.6 265.0L417.8 266.5M417.6 265.0L419.1 265.3M427.4 249.0L426.2 247.2L426.4 245.9M426.2 247.2L424.9 246.9M427.4 249.0L430.5 244.1L432.7 242.3M430.5 244.1L431.2 241.4M427.4 249.0L425.5 255.6L423.7 258.3M425.5 255.6L425.4 258.9M429.0 253.0L426.5 258.3L424.6 260.3M426.5 258.3L426.2 261.1M429.0 253.0L431.6 246.8L433.6 244.3M431.6 246.8L431.9 243.6M429.0 253.0L428.9 253.9L427.9 254.2M428.9 253.9L429.7 254.5M255.8 240.1L253.9 238.3L253.6 236.9M253.9 238.3L252.4 238.2M255.8 240.1L258.0 246.9L258.2 250.3M258.0 246.9L259.9 249.8M255.8 240.1L255.4 235.0L256.1 232.7M255.4 235.0L254.4 232.8M262.5 244.4L259.9 237.9L259.6 234.7M259.9 237.9L257.9 235.3M262.5 244.4L262.5 249.8L261.6 252.3M262.5 249.8L263.4 252.3M262.5 244.4L265.1 245.5L265.9 246.8M265.1 245.5L266.6 245.1M259.0 248.4L259.8 246.1L260.9 245.4M259.8 246.1L259.2 244.8M259.0 248.4L261.3 255.3L261.4 258.7M261.3 255.3L263.1 258.1M259.0 248.4L256.1 243.9L255.5 241.4M256.1 243.9L254.0 242.4M259.5 254.9L256.3 248.3L255.7 244.8M256.3 248.3L254.1 245.6M259.5 254.9L261.6 259.6L261.7 262.1M261.6 259.6L263.3 261.4M259.5 254.9L260.5 256.9L260.1 258.2M260.5 256.9L261.7 257.3M268.6 260.0L266.2 253.9L265.9 250.8M266.2 253.9L264.3 251.4M268.6 260.0L272.0 263.1L272.9 265.2M272.0 263.1L274.2 263.8M268.6 260.0L267.7 263.0L266.4 264.1M267.7 263.0L268.1 264.7M293.1 280.5L288.4 276.8L286.8 274.4M288.4 276.8L285.7 275.9M293.1 280.5L297.6 280.1L299.7 280.9M297.6 280.1L299.5 279.1M293.1 280.5L293.4 284.5L292.6 286.4M293.4 284.5L294.4 286.3M310.2 291.3L309.0 287.4L309.4 285.4M309.0 287.4L307.6 285.9M310.2 291.3L316.8 294.8L319.4 297.2M316.8 294.8L320.3 295.6M310.2 291.3L304.8 291.8L302.3 291.1M304.8 291.8L302.4 292.9M314.2 300.8L307.5 298.1L304.8 296.0M307.5 298.1L304.1 297.7M314.2 300.8L319.5 301.2L321.9 302.2M319.5 301.2L322.0 300.4M314.2 300.8L315.7 303.1L315.6 304.6M315.7 303.1L317.1 303.7M335.0 306.5L333.4 305.0L333.4 303.6M333.4 305.0L332.1 304.9M335.0 306.5L342.0 307.6L345.0 308.9M342.0 307.6L345.3 307.2M335.0 306.5L329.6 306.9L327.1 306.2M329.6 306.9L327.2 308.0M339.4 308.8L332.5 308.5L329.5 307.4M332.5 308.5L329.4 309.2M339.4 308.8L344.9 309.1L347.4 310.1M344.9 309.1L347.5 308.3M339.4 308.8L340.7 308.8L341.3 309.7M340.7 308.8L341.3 307.9M327.0 287.6L320.3 284.9L317.5 282.8M320.3 284.9L316.9 284.5M327.0 287.6L332.7 285.5L335.5 285.5M332.7 285.5L334.9 283.8M327.0 287.6L328.1 292.3L327.7 294.7M328.1 292.3L329.4 294.3M347.8 293.3L346.6 289.4L346.9 287.3M346.6 289.4L345.2 287.8M347.8 293.3L354.7 294.3L357.8 295.7M354.7 294.3L358.1 293.9M347.8 293.3L342.0 296.1L339.0 296.6M342.0 296.1L339.8 298.2M351.8 302.7L344.7 302.5L341.5 301.4M344.7 302.5L341.4 303.2M351.8 302.7L357.4 300.7L360.3 300.6M357.4 300.7L359.7 298.9M351.8 302.7L353.2 305.0L353.1 306.6M353.2 305.0L354.6 305.6M363.2 284.1L356.9 283.2L354.2 281.9M356.9 283.2L353.9 283.7M363.2 284.1L367.7 280.9L370.2 280.2M367.7 280.9L369.1 278.7M363.2 284.1L365.1 288.2L365.1 290.4M365.1 288.2L366.8 289.7M379.0 233.9L373.7 235.6L371.0 235.6M373.7 235.6L371.6 237.3M379.0 233.9L383.0 238.9L384.1 241.8M383.0 238.9L385.5 240.7M379.0 233.9L380.4 227.0L381.9 224.1M380.4 227.0L380.1 223.7M396.2 227.4L394.5 234.6L392.8 237.6M394.5 234.6L394.6 238.1M396.2 227.4L402.2 224.9L405.3 224.6M402.2 224.9L404.6 222.9M396.2 227.4L391.9 222.7L390.6 219.9M391.9 222.7L389.3 221.2M407.2 241.5L401.9 244.1L399.1 244.4M401.9 244.1L399.8 246.0M407.2 241.5L410.2 246.2L410.8 248.7M410.2 246.2L412.3 247.8M407.2 241.5L409.6 234.4L411.5 231.4M409.6 234.4L409.8 230.8M421.4 233.7L419.7 240.9L418.1 244.0M419.7 240.9L419.8 244.4M421.4 233.7L425.4 231.1L427.8 230.7M425.4 231.1L426.8 229.2M421.4 233.7L419.1 229.2L418.9 226.7M419.1 229.2L417.3 227.5M426.1 245.7L422.9 249.0L420.8 249.8M422.9 249.0L422.0 251.1M426.1 245.7L426.9 249.1L426.4 250.8M426.9 249.1L428.2 250.4M426.1 245.7L428.6 239.2L430.6 236.5M428.6 239.2L428.9 235.9M363.9 221.2L363.6 227.2L362.5 229.8M363.6 227.2L364.3 229.9M363.9 221.2L370.3 218.5L373.5 218.2M370.3 218.5L372.8 216.5M363.9 221.2L357.9 217.9L355.6 215.6M357.9 217.9L354.7 217.2M346.3 232.2L351.8 234.5L353.9 236.4M351.8 234.5L354.6 234.7M346.3 232.2L346.1 225.2L346.9 222.1M346.1 225.2L345.1 222.1M346.3 232.2L341.0 236.8L338.0 238.2M341.0 236.8L339.2 239.5M327.7 223.9L333.6 219.7L336.8 218.5M333.6 219.7L335.8 217.0M327.7 223.9L320.9 220.7L318.1 218.4M320.9 220.7L317.4 220.1M327.7 223.9L328.5 231.2L328.0 234.6M328.5 231.2L329.8 234.4M310.7 236.5L317.2 239.7L319.7 241.9M317.2 239.7L320.5 240.3M310.7 236.5L309.5 229.2L309.8 225.7M309.5 229.2L308.1 226.0M310.7 236.5L305.5 240.7L302.5 242.0M305.5 240.7L303.6 243.4M292.2 227.1L297.1 222.9L299.9 221.6M297.1 222.9L298.7 220.3M292.2 227.1L286.4 224.0L284.2 221.7M286.4 224.0L283.3 223.3M292.2 227.1L293.0 234.4L292.5 237.8M293.0 234.4L294.3 237.6M279.9 238.2L284.8 241.8L286.5 244.2M284.8 241.8L287.6 242.8M279.9 238.2L278.2 231.4L278.3 228.1M278.2 231.4L276.5 228.5M279.9 238.2L276.8 241.3L274.7 242.1M276.8 241.3L276.0 243.4M350.5 251.6L354.6 247.5L357.1 246.3M354.6 247.5L355.8 245.1M350.5 251.6L343.8 249.8L341.0 248.1M343.8 249.8L340.6 249.8M350.5 251.6L353.1 257.5L353.4 260.6M353.1 257.5L355.1 259.9M336.5 264.6L334.5 258.5L334.4 255.4M334.5 258.5L332.7 256.0M336.5 264.6L331.4 269.0L328.4 270.4M331.4 269.0L329.6 271.7M336.5 264.6L343.7 266.2L346.8 267.8M343.7 266.2L347.2 266.1M343.4 281.3L348.3 277.4L351.1 276.4M348.3 277.4L350.0 274.9M343.4 281.3L336.0 280.2L332.7 278.9M336.0 280.2L332.5 280.6M343.4 281.3L345.8 286.2L346.2 288.9M345.8 286.2L347.8 288.1M329.0 291.3L326.4 286.9L325.9 284.5M326.4 286.9L324.4 285.4M329.0 291.3L324.5 294.0L322.0 294.4M324.5 294.0L322.9 296.0M329.0 291.3L336.2 292.9L339.3 294.5M336.2 292.9L339.7 292.8M336.5 301.5L341.3 299.8L343.7 299.8M341.3 299.8L343.1 298.1M336.5 301.5L329.6 300.8L326.5 299.6M329.6 300.8L326.3 301.4M336.5 301.5L338.8 303.9L339.2 305.6M338.8 303.9L340.5 304.4M315.3 257.8L320.3 253.9L323.1 252.9M320.3 253.9L322.0 251.5M315.3 257.8L308.6 255.0L305.8 252.9M308.6 255.0L305.1 254.5M315.3 257.8L317.2 264.5L317.1 267.8M317.2 264.5L318.9 267.3M301.0 267.8L299.0 261.7L298.9 258.6M299.0 261.7L297.2 259.2M301.0 267.8L296.5 270.5L294.0 270.9M296.5 270.5L294.9 272.5M301.0 267.8L307.6 271.2L310.1 273.5M307.6 271.2L311.0 271.9M307.9 284.5L312.2 282.4L314.5 282.2M312.2 282.4L313.7 280.6M307.9 284.5L301.1 281.7L298.3 279.6M301.1 281.7L297.7 281.2M307.9 284.5L310.3 289.4L310.7 292.1M310.3 289.4L312.3 291.3M284.2 257.6L287.7 254.9L289.8 254.3M287.7 254.9L288.7 252.9M284.2 257.6L279.6 254.3L278.1 252.1M279.6 254.3L277.0 253.6M284.2 257.6L285.2 263.7L284.8 266.6M285.2 263.7L286.6 266.3M370.7 252.7L368.1 248.2L367.7 245.8M368.1 248.2L366.2 246.7M370.7 252.7L366.7 258.2L364.1 260.2M366.7 258.2L365.5 261.3M370.7 252.7L377.4 251.5L380.6 251.9M377.4 251.5L380.3 250.1M378.9 266.7L372.1 267.7L368.9 267.2M372.1 267.7L369.1 269.0M378.9 266.7L381.6 271.6L382.1 274.3M381.6 271.6L383.7 273.4M378.9 266.7L382.9 261.0L385.4 258.8M382.9 261.0L384.0 257.8M398.2 262.1L395.8 257.8L395.5 255.5M395.8 257.8L394.0 256.3M398.2 262.1L394.6 268.5L392.2 271.0M394.6 268.5L393.7 271.8M398.2 262.1L404.1 259.9L407.2 259.8M404.1 259.9L406.5 258.1M404.1 273.1L398.5 275.9L395.6 276.3M398.5 275.9L396.4 277.9M404.1 273.1L405.6 276.1L405.5 277.9M405.6 276.1L407.1 277.1M404.1 273.1L408.1 267.3L410.7 265.2M408.1 267.3L409.2 264.2M417.9 264.5L417.3 261.6L418.0 260.1M417.3 261.6L416.2 260.4M417.9 264.5L414.9 270.4L412.7 272.6M414.9 270.4L414.3 273.4M417.9 264.5L421.4 261.7L423.6 261.0M421.4 261.7L422.4 259.6M365.5 282.4L363.1 278.2L362.8 275.8M363.1 278.2L361.3 276.7M365.5 282.4L360.7 287.0L357.9 288.4M360.7 287.0L359.1 289.7M365.5 282.4L372.7 282.1L376.0 282.9M372.7 282.1L375.9 281.1M371.4 293.4L364.6 294.4L361.4 293.9M364.6 294.4L361.7 295.7M371.4 293.4L373.0 296.5L372.9 298.2M373.0 296.5L374.5 297.4M371.4 293.4L376.6 289.5L379.6 288.4M376.6 289.5L378.5 287.0M390.7 288.8L389.6 286.4L389.9 284.9M389.6 286.4L388.2 285.7M390.7 288.8L385.9 293.3L383.1 294.8M385.9 293.3L384.3 296.1M390.7 288.8L396.7 286.6L399.7 286.5M396.7 286.6L399.1 284.8M356.8 302.6L354.8 300.5L354.6 298.9M354.8 300.5L353.3 300.1M356.8 302.6L352.4 304.6L350.0 304.8M352.4 304.6L350.7 306.4M356.8 302.6L363.2 302.6L366.0 303.5M363.2 302.6L366.1 301.7M433.0 238.6L433.2 234.4L434.2 232.5M433.2 234.4L432.4 232.4M433.0 238.6L431.6 244.3L430.0 246.6M431.6 244.3L431.8 247.1M433.0 238.6L434.3 237.1L435.6 237.1M434.3 237.1L434.2 235.9M266.6 230.0L267.8 235.8L267.5 238.7M267.8 235.8L269.3 238.3M266.6 230.0L269.2 225.9L271.2 224.6M269.2 225.9L269.7 223.6M266.6 230.0L262.6 228.3L261.2 226.7M262.6 228.3L260.5 228.3M325.8 305.4L331.6 306.5L334.1 307.9M331.6 306.5L334.4 306.1M325.8 305.4L322.4 303.4L321.2 301.7M322.4 303.4L320.3 303.3M325.8 305.4L323.4 306.2L322.1 305.7M323.4 306.2L322.6 307.4M306.5 299.3L309.5 299.4L310.8 300.3M309.5 299.4L310.8 298.5M306.5 299.3L299.7 296.5L296.9 294.3M299.7 296.5L296.2 296.0M306.5 299.3L310.5 302.1L311.8 304.1M310.5 302.1L312.9 302.7M299.4 297.0L305.7 300.6L308.2 303.0M305.7 300.6L309.1 301.4M299.4 297.0L294.9 295.0L293.2 293.2M294.9 295.0L292.4 294.8M299.4 297.0L297.6 295.6L297.3 294.2M297.6 295.6L296.2 295.6M281.8 284.2L283.1 286.3L282.9 287.8M283.1 286.3L284.4 286.8M281.8 284.2L276.5 279.2L274.7 276.3M276.5 279.2L273.5 277.6M281.8 284.2L285.8 287.0L287.1 289.0M285.8 287.0L288.1 287.5M279.5 277.1L284.2 282.2L285.7 285.2M284.2 282.2L287.1 283.9M279.5 277.1L275.0 274.5L273.4 272.5M275.0 274.5L272.5 274.1M279.5 277.1L279.3 274.5L280.1 273.3M279.3 274.5L278.3 273.4M296.1 288.7L302.5 292.3L304.9 294.7M302.5 292.3L305.8 293.1M296.1 288.7L293.2 284.5L292.6 282.1M293.2 284.5L291.2 283.1M296.1 288.7L292.7 289.4L290.9 288.8M292.7 289.4L291.3 290.5M278.5 275.8L281.4 275.9L282.7 276.8M281.4 275.9L282.8 275.0M278.5 275.8L273.2 270.9L271.5 268.0M273.2 270.9L270.2 269.3M278.5 275.8L280.9 280.7L281.1 283.4M280.9 280.7L282.8 282.6M271.3 273.6L276.1 279.2L277.5 282.4M276.1 279.2L278.9 281.2M271.3 273.6L268.4 269.4L267.9 266.9M268.4 269.4L266.4 268.0M271.3 273.6L269.5 272.1L269.2 270.8M269.5 272.1L268.1 272.2M273.4 261.5L278.0 266.3L279.4 269.1M278.0 266.3L280.7 267.8M273.4 261.5L272.4 256.9L272.8 254.6M272.4 256.9L271.1 255.0M273.4 261.5L269.8 261.3L268.2 260.3M269.8 261.3L268.1 262.1M419.6 269.0L422.6 264.7L424.7 263.2M422.6 264.7L423.2 262.2M419.6 269.0L416.0 273.4L413.7 274.8M416.0 273.4L415.1 275.9M419.6 269.0L420.2 269.0L420.5 269.9M420.2 269.0L420.5 268.1M407.8 282.5L408.1 282.4L408.5 283.2M408.1 282.4L408.0 281.5M407.8 282.5L402.9 287.0L400.1 288.4M402.9 287.0L401.3 289.8M407.8 282.5L412.3 278.1L415.0 276.7M412.3 278.1L413.7 275.4M405.4 280.5L410.7 276.7L413.7 275.7M410.7 276.7L412.6 274.3M405.4 280.5L401.3 285.7L398.8 287.5M401.3 285.7L400.2 288.6M405.4 280.5L404.1 279.1L404.2 277.8M404.1 279.1L402.9 279.0M387.9 289.6L389.6 291.8L389.6 293.4M389.6 291.8L391.1 292.3M387.9 289.6L381.6 291.9L378.5 292.1M381.6 291.9L379.1 293.8M387.9 289.6L392.4 285.2L395.1 283.8M392.4 285.2L393.8 282.5M382.4 282.4L388.7 280.3L391.9 280.3M388.7 280.3L391.3 278.5M382.4 282.4L377.9 287.0L375.3 288.5M377.9 287.0L376.6 289.8M382.4 282.4L380.5 279.7L380.4 278.0M380.5 279.7L378.9 279.1M392.6 293.7L398.0 289.9L400.9 288.9M398.0 289.9L399.9 287.5M392.6 293.7L387.2 296.6L384.3 297.2M387.2 296.6L385.1 298.8M392.6 293.7L392.8 294.5L391.9 295.1M392.8 294.5L393.7 294.8M375.1 302.9L375.4 302.8L375.8 303.6M375.4 302.8L375.3 301.9M375.1 302.9L368.8 305.1L365.7 305.3M368.8 305.1L366.3 307.0M375.1 302.9L381.0 300.7L384.0 300.5M381.0 300.7L383.4 298.8M372.7 300.8L379.4 299.3L382.7 299.5M379.4 299.3L382.3 297.8M372.7 300.8L367.2 303.8L364.3 304.3M367.2 303.8L365.2 305.9M372.7 300.8L371.5 299.4L371.6 298.2M371.5 299.4L370.2 299.4M358.5 307.1L364.3 305.6L367.2 305.8M364.3 305.6L366.7 304.0M358.5 307.1L353.6 307.6L351.2 307.0M353.6 307.6L351.4 308.8M358.5 307.1L357.8 307.9L356.7 307.7M357.8 307.9L358.1 308.9" stroke="#8e98f0" stroke-width="0.55" fill="none"/>
    <path d="M324.1 192.0L356.7 185.2M324.1 192.0L328.7 161.7M324.1 192.0L341.4 220.0M324.1 192.0L303.8 218.1M324.1 192.0L296.0 182.0M356.7 185.2L392.2 181.9M356.7 185.2L328.7 161.7M356.7 185.2L366.1 153.1M356.7 185.2L341.4 220.0M356.7 185.2L380.0 216.9M392.2 181.9L416.7 183.6M392.2 181.9L366.1 153.1M392.2 181.9L399.7 155.2M392.2 181.9L380.0 216.9M392.2 181.9L412.4 213.6M416.7 183.6L399.7 155.2M416.7 183.6L412.4 213.6M416.7 183.6L432.3 206.4M416.7 183.6L424.5 170.4M328.7 161.7L366.1 153.1M328.7 161.7L336.1 135.0M328.7 161.7L296.0 182.0M328.7 161.7L299.7 149.7M366.1 153.1L399.7 155.2M366.1 153.1L336.1 135.0M366.1 153.1L371.7 131.8M399.7 155.2L371.7 131.8M399.7 155.2L424.5 170.4M399.7 155.2L401.3 140.5M336.1 135.0L371.7 131.8M336.1 135.0L343.6 122.4M336.1 135.0L299.7 149.7M336.1 135.0L310.9 128.6M371.7 131.8L343.6 122.4M371.7 131.8L401.3 140.5M371.7 131.8L368.4 123.4M343.6 122.4L310.9 128.6M343.6 122.4L368.4 123.4M343.6 122.4L330.9 121.5M341.4 220.0L361.5 251.7M341.4 220.0L380.0 216.9M341.4 220.0L303.8 218.1M341.4 220.0L322.2 252.9M361.5 251.7L380.0 216.9M380.0 216.9L397.0 248.5M380.0 216.9L412.4 213.6M397.0 248.5L412.4 213.6M412.4 213.6L423.8 243.7M412.4 213.6L432.3 206.4M303.8 218.1L286.5 247.8M303.8 218.1L322.2 252.9M303.8 218.1L296.0 182.0M303.8 218.1L272.6 211.4M286.5 247.8L272.6 211.4M296.0 182.0L270.8 175.7M296.0 182.0L272.6 211.4M296.0 182.0L299.7 149.7M270.8 175.7L258.4 175.4M270.8 175.7L272.6 211.4M270.8 175.7L253.4 205.4M270.8 175.7L299.7 149.7M270.8 175.7L278.2 149.0M258.4 175.4L253.4 205.4M258.4 175.4L278.2 149.0M258.4 175.4L265.5 162.2M258.4 175.4L250.1 197.0M272.6 211.4L253.4 205.4M272.6 211.4L261.2 241.4M253.4 205.4L261.2 241.4M253.4 205.4L250.1 197.0M253.4 205.4L250.0 234.7M299.7 149.7L310.9 128.6M299.7 149.7L278.2 149.0M310.9 128.6L278.2 149.0M310.9 128.6L330.9 121.5M310.9 128.6L294.0 135.0M278.2 149.0L294.0 135.0M278.2 149.0L265.5 162.2M423.8 243.7L432.3 206.4M436.9 234.2L432.3 206.4M436.9 234.2L437.0 196.5M432.3 206.4L424.5 170.4M432.3 206.4L437.0 196.5M424.5 170.4L421.2 162.0M424.5 170.4L401.3 140.5M424.5 170.4L437.0 196.5M421.2 162.0L408.1 161.8M421.2 162.0L401.3 140.5M421.2 162.0L393.2 138.6M421.2 162.0L425.8 189.8M421.2 162.0L437.0 196.5M408.1 161.8L393.2 138.6M408.1 161.8L400.6 183.4M408.1 161.8L425.8 189.8M408.1 161.8L380.4 151.8M401.3 140.5L393.2 138.6M401.3 140.5L368.4 123.4M393.2 138.6L368.4 123.4M393.2 138.6L380.4 151.8M393.2 138.6L356.8 129.3M368.4 123.4L330.9 121.5M368.4 123.4L356.8 129.3M330.9 121.5L318.1 134.7M330.9 121.5L294.0 135.0M330.9 121.5L356.8 129.3M318.1 134.7L310.4 156.8M318.1 134.7L294.0 135.0M318.1 134.7L285.4 155.0M318.1 134.7L342.9 149.8M318.1 134.7L356.8 129.3M310.4 156.8L285.4 155.0M310.4 156.8L325.5 179.5M310.4 156.8L342.9 149.8M310.4 156.8L290.0 182.8M294.0 135.0L285.4 155.0M294.0 135.0L265.5 162.2M285.4 155.0L265.5 162.2M285.4 155.0L290.0 182.8M285.4 155.0L263.2 187.5M265.5 162.2L250.1 197.0M265.5 162.2L263.2 187.5M250.1 197.0L254.7 224.8M250.1 197.0L250.0 234.7M250.1 197.0L263.2 187.5M254.7 224.8L263.2 187.5M383.2 213.1L400.6 183.4M383.2 213.1L364.8 178.3M400.6 183.4L414.4 219.8M400.6 183.4L425.8 189.8M400.6 183.4L364.8 178.3M400.6 183.4L380.4 151.8M414.4 219.8L425.8 189.8M425.8 189.8L433.6 225.8M425.8 189.8L437.0 196.5M433.6 225.8L437.0 196.5M345.7 211.2L325.5 179.5M345.7 211.2L364.8 178.3M325.5 179.5L364.8 178.3M325.5 179.5L342.9 149.8M325.5 179.5L307.0 214.3M325.5 179.5L290.0 182.8M364.8 178.3L342.9 149.8M364.8 178.3L380.4 151.8M342.9 149.8L380.4 151.8M342.9 149.8L356.8 129.3M380.4 151.8L356.8 129.3M307.0 214.3L290.0 182.8M274.6 217.6L290.0 182.8M274.6 217.6L263.2 187.5M290.0 182.8L263.2 187.5" stroke="#4f5b6a" stroke-width="0.6" fill="none"/>
    <path d="M361.5 251.7L376.7 274.4M361.5 251.7L397.0 248.5M361.5 251.7L322.2 252.9M361.5 251.7L344.1 281.4M376.7 274.4L397.0 248.5M376.7 274.4L344.1 281.4M376.7 274.4L401.6 276.2M376.7 274.4L368.9 296.5M397.0 248.5L401.6 276.2M397.0 248.5L423.8 243.7M286.5 247.8L278.9 269.4M286.5 247.8L322.2 252.9M286.5 247.8L306.6 279.4M286.5 247.8L261.2 241.4M278.9 269.4L306.6 279.4M278.9 269.4L261.2 241.4M278.9 269.4L265.8 269.2M278.9 269.4L293.9 292.7M322.2 252.9L306.6 279.4M322.2 252.9L344.1 281.4M306.6 279.4L344.1 281.4M306.6 279.4L293.9 292.7M306.6 279.4L330.3 301.9M344.1 281.4L330.3 301.9M344.1 281.4L368.9 296.5M261.2 241.4L250.0 234.7M261.2 241.4L265.8 269.2M401.6 276.2L421.5 269.0M401.6 276.2L423.8 243.7M401.6 276.2L368.9 296.5M401.6 276.2L393.1 296.2M421.5 269.0L428.6 255.8M421.5 269.0L423.8 243.7M421.5 269.0L436.9 234.2M421.5 269.0L408.8 282.2M421.5 269.0L393.1 296.2M428.6 255.8L436.9 234.2M428.6 255.8L416.2 255.5M428.6 255.8L433.6 225.8M428.6 255.8L408.8 282.2M423.8 243.7L436.9 234.2M436.9 234.2L433.6 225.8M254.7 224.8L270.4 247.6M254.7 224.8L250.0 234.7M254.7 224.8L262.5 260.8M254.7 224.8L274.6 217.6M270.4 247.6L262.5 260.8M270.4 247.6L294.8 249.3M270.4 247.6L274.6 217.6M270.4 247.6L287.3 276.0M250.0 234.7L262.5 260.8M250.0 234.7L265.8 269.2M262.5 260.8L265.8 269.2M262.5 260.8L287.3 276.0M262.5 260.8L285.7 290.7M265.8 269.2L293.9 292.7M265.8 269.2L285.7 290.7M293.9 292.7L318.6 307.8M293.9 292.7L330.3 301.9M293.9 292.7L285.7 290.7M318.6 307.8L343.4 308.8M318.6 307.8L330.3 301.9M318.6 307.8L356.2 309.7M318.6 307.8L315.4 299.5M318.6 307.8L285.7 290.7M343.4 308.8L356.2 309.7M343.4 308.8L350.9 296.2M343.4 308.8L315.4 299.5M343.4 308.8L376.1 302.6M330.3 301.9L356.2 309.7M330.3 301.9L368.9 296.5M356.2 309.7L368.9 296.5M356.2 309.7L376.1 302.6M356.2 309.7L393.1 296.2M368.9 296.5L393.1 296.2M362.9 239.3L383.2 213.1M362.9 239.3L391.0 249.2M362.9 239.3L345.7 211.2M362.9 239.3L330.3 246.1M362.9 239.3L358.3 269.5M383.2 213.1L391.0 249.2M383.2 213.1L414.4 219.8M383.2 213.1L345.7 211.2M391.0 249.2L414.4 219.8M391.0 249.2L416.2 255.5M391.0 249.2L358.3 269.5M391.0 249.2L387.3 281.5M414.4 219.8L416.2 255.5M414.4 219.8L433.6 225.8M416.2 255.5L433.6 225.8M416.2 255.5L387.3 281.5M416.2 255.5L408.8 282.2M345.7 211.2L330.3 246.1M345.7 211.2L307.0 214.3M330.3 246.1L294.8 249.3M330.3 246.1L307.0 214.3M330.3 246.1L358.3 269.5M330.3 246.1L320.9 278.1M294.8 249.3L307.0 214.3M294.8 249.3L274.6 217.6M294.8 249.3L320.9 278.1M294.8 249.3L287.3 276.0M307.0 214.3L274.6 217.6M358.3 269.5L350.9 296.2M358.3 269.5L320.9 278.1M358.3 269.5L387.3 281.5M350.9 296.2L320.9 278.1M350.9 296.2L315.4 299.5M350.9 296.2L387.3 281.5M350.9 296.2L376.1 302.6M320.9 278.1L315.4 299.5M320.9 278.1L287.3 276.0M315.4 299.5L287.3 276.0M315.4 299.5L285.7 290.7M287.3 276.0L285.7 290.7M387.3 281.5L408.8 282.2M387.3 281.5L376.1 302.6M408.8 282.2L376.1 302.6M408.8 282.2L393.1 296.2M376.1 302.6L393.1 296.2" stroke="#1e1ef5" stroke-width="1.4" fill="none"/>
    <g fill="#1f8a1f"><circle cx="324.1" cy="192.0" r="1.15"/><circle cx="356.7" cy="185.2" r="1.15"/><circle cx="392.2" cy="181.9" r="1.15"/><circle cx="416.7" cy="183.6" r="1.15"/><circle cx="328.7" cy="161.7" r="1.15"/><circle cx="366.1" cy="153.1" r="1.15"/><circle cx="399.7" cy="155.2" r="1.15"/><circle cx="336.1" cy="135.0" r="1.15"/><circle cx="371.7" cy="131.8" r="1.15"/><circle cx="343.6" cy="122.4" r="1.15"/><circle cx="341.4" cy="220.0" r="1.15"/><circle cx="380.0" cy="216.9" r="1.15"/><circle cx="412.4" cy="213.6" r="1.15"/><circle cx="303.8" cy="218.1" r="1.15"/><circle cx="296.0" cy="182.0" r="1.15"/><circle cx="270.8" cy="175.7" r="1.15"/><circle cx="258.4" cy="175.4" r="1.15"/><circle cx="272.6" cy="211.4" r="1.15"/><circle cx="253.4" cy="205.4" r="1.15"/><circle cx="299.7" cy="149.7" r="1.15"/><circle cx="310.9" cy="128.6" r="1.15"/><circle cx="278.2" cy="149.0" r="1.15"/><circle cx="432.3" cy="206.4" r="1.15"/><circle cx="424.5" cy="170.4" r="1.15"/><circle cx="421.2" cy="162.0" r="1.15"/><circle cx="408.1" cy="161.8" r="1.15"/><circle cx="401.3" cy="140.5" r="1.15"/><circle cx="393.2" cy="138.6" r="1.15"/><circle cx="368.4" cy="123.4" r="1.15"/><circle cx="330.9" cy="121.5" r="1.15"/><circle cx="318.1" cy="134.7" r="1.15"/><circle cx="310.4" cy="156.8" r="1.15"/><circle cx="294.0" cy="135.0" r="1.15"/><circle cx="285.4" cy="155.0" r="1.15"/><circle cx="265.5" cy="162.2" r="1.15"/><circle cx="250.1" cy="197.0" r="1.15"/><circle cx="400.6" cy="183.4" r="1.15"/><circle cx="425.8" cy="189.8" r="1.15"/><circle cx="325.5" cy="179.5" r="1.15"/><circle cx="364.8" cy="178.3" r="1.15"/><circle cx="342.9" cy="149.8" r="1.15"/><circle cx="380.4" cy="151.8" r="1.15"/><circle cx="290.0" cy="182.8" r="1.15"/><circle cx="437.0" cy="196.5" r="1.15"/><circle cx="356.8" cy="129.3" r="1.15"/><circle cx="263.2" cy="187.5" r="1.15"/></g>
    <g fill="#0a0ad0"><circle cx="361.5" cy="251.7" r="1.5"/><circle cx="376.7" cy="274.4" r="1.5"/><circle cx="397.0" cy="248.5" r="1.5"/><circle cx="286.5" cy="247.8" r="1.5"/><circle cx="278.9" cy="269.4" r="1.5"/><circle cx="322.2" cy="252.9" r="1.5"/><circle cx="306.6" cy="279.4" r="1.5"/><circle cx="344.1" cy="281.4" r="1.5"/><circle cx="261.2" cy="241.4" r="1.5"/><circle cx="401.6" cy="276.2" r="1.5"/><circle cx="421.5" cy="269.0" r="1.5"/><circle cx="428.6" cy="255.8" r="1.5"/><circle cx="423.8" cy="243.7" r="1.5"/><circle cx="436.9" cy="234.2" r="1.5"/><circle cx="254.7" cy="224.8" r="1.5"/><circle cx="270.4" cy="247.6" r="1.5"/><circle cx="250.0" cy="234.7" r="1.5"/><circle cx="262.5" cy="260.8" r="1.5"/><circle cx="265.8" cy="269.2" r="1.5"/><circle cx="293.9" cy="292.7" r="1.5"/><circle cx="318.6" cy="307.8" r="1.5"/><circle cx="343.4" cy="308.8" r="1.5"/><circle cx="330.3" cy="301.9" r="1.5"/><circle cx="356.2" cy="309.7" r="1.5"/><circle cx="368.9" cy="296.5" r="1.5"/><circle cx="362.9" cy="239.3" r="1.5"/><circle cx="383.2" cy="213.1" r="1.5"/><circle cx="391.0" cy="249.2" r="1.5"/><circle cx="414.4" cy="219.8" r="1.5"/><circle cx="416.2" cy="255.5" r="1.5"/><circle cx="433.6" cy="225.8" r="1.5"/><circle cx="345.7" cy="211.2" r="1.5"/><circle cx="330.3" cy="246.1" r="1.5"/><circle cx="294.8" cy="249.3" r="1.5"/><circle cx="307.0" cy="214.3" r="1.5"/><circle cx="274.6" cy="217.6" r="1.5"/><circle cx="358.3" cy="269.5" r="1.5"/><circle cx="350.9" cy="296.2" r="1.5"/><circle cx="320.9" cy="278.1" r="1.5"/><circle cx="315.4" cy="299.5" r="1.5"/><circle cx="287.3" cy="276.0" r="1.5"/><circle cx="387.3" cy="281.5" r="1.5"/><circle cx="408.8" cy="282.2" r="1.5"/><circle cx="376.1" cy="302.6" r="1.5"/><circle cx="285.7" cy="290.7" r="1.5"/><circle cx="393.1" cy="296.2" r="1.5"/></g>
  </svg>
  <!-- nav cube -->
  <svg style="left:0;top:0" width="700" height="424" viewBox="0 0 700 424">
    <path d="M66.4 86.7V56.5M66.4 86.7L40.4 102M66.4 86.7L92.8 102" stroke="#8e8e8e" stroke-width="0.9"/>
    <path d="M66.4 68L83 77.4V96.2L66.4 105.6L49.8 96.2V77.4Z" fill="#b4a7d6" stroke="#8b8699" stroke-width="0.8"/>
    <path d="M66.4 86.7L49.8 77.4M66.4 86.7L83 77.4M66.4 86.7V105.6" stroke="#f2eefa" stroke-width="0.9"/>
    <path d="M66.4 86.7V68M66.4 86.7L49.8 96.2M66.4 86.7L83 96.2" stroke="#6f6a80" stroke-width="0.8"/>
    <circle cx="66.4" cy="86.7" r="1.6" fill="#fafa70"/>
    <circle cx="66.4" cy="56.5" r="3.5" fill="#b9acd9"/>
    <circle cx="40.4" cy="102" r="3.5" fill="#b9acd9"/>
    <circle cx="92.8" cy="102" r="3.5" fill="#b9acd9"/>
    <g font-family="Liberation Sans" font-size="4.6" fill="#fff" text-anchor="middle">
      <text x="66.4" y="58.1">Y</text><text x="40.4" y="103.6">Z</text><text x="92.8" y="103.6">X</text>
    </g>
  </svg>
  <!-- arrow -->
  <svg style="left:0;top:0" width="700" height="424" viewBox="0 0 700 424">
    <defs><filter id="sh" x="-20%" y="-20%" width="140%" height="140%"><feDropShadow dx="1" dy="2" stdDeviation="1.2" flood-color="#000" flood-opacity="0.45"/></filter></defs>
    <path d="M17.8 225.2L48.5 187L55 200.2L154.5 154L160.9 167.5L61.6 213.2L66.9 226.2Z" fill="#fa4341" filter="url(#sh)"/>
  </svg>
</div>
</body></html>
